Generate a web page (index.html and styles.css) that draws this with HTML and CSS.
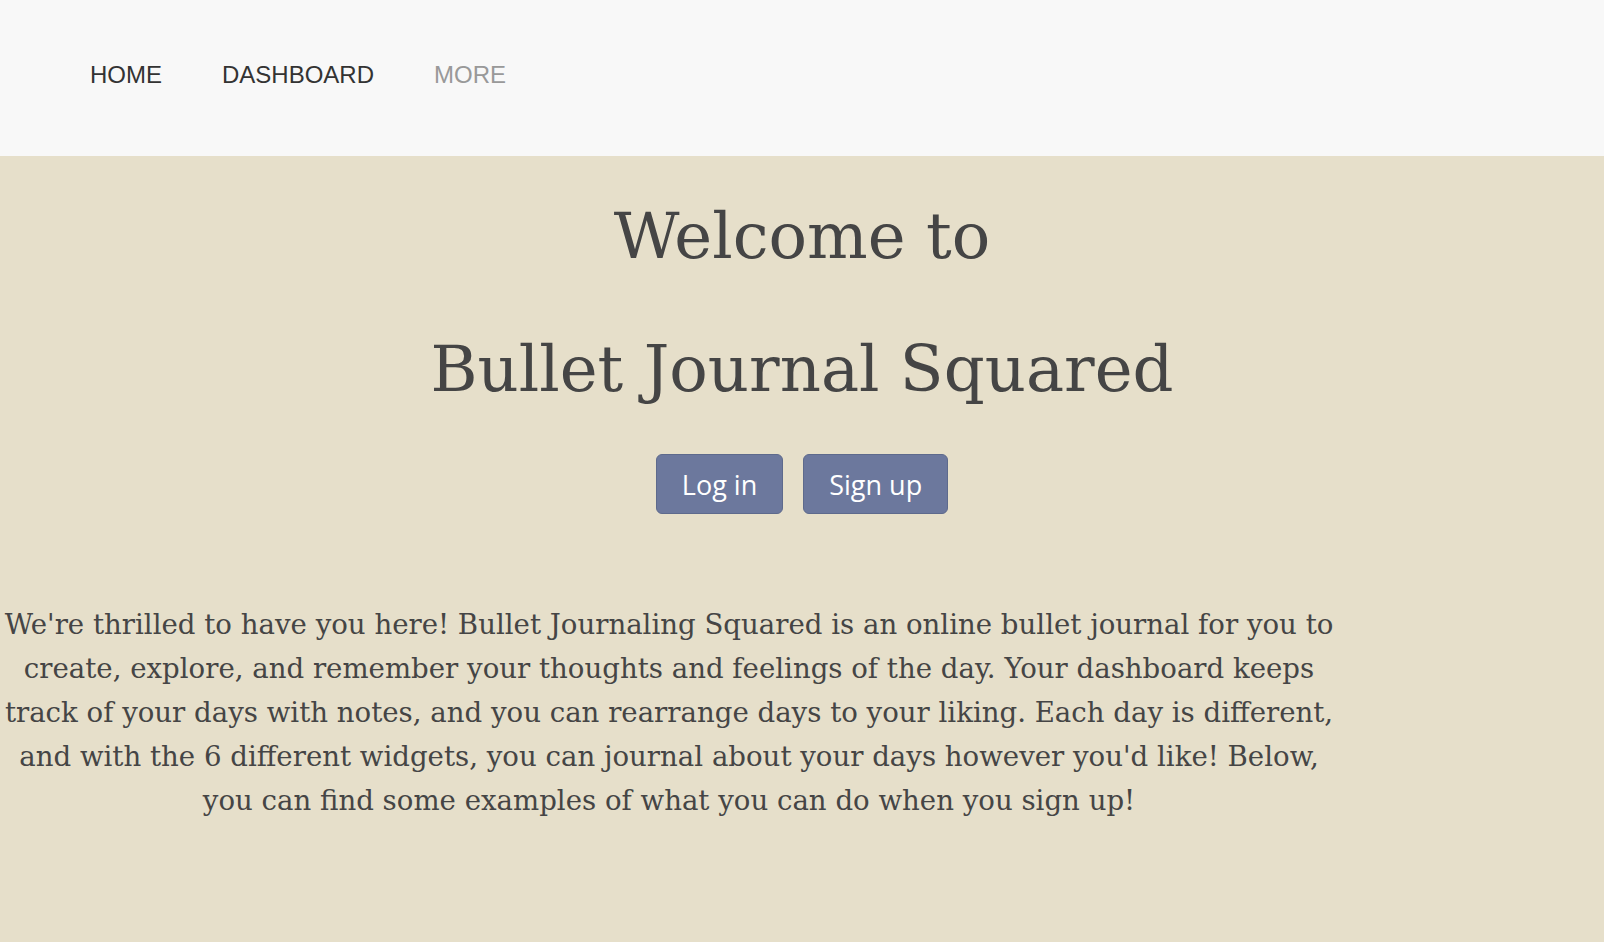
FILE: index.html
```html
<!DOCTYPE html>
<html lang="en">
<head>
<meta charset="utf-8">
<title>Bullet Journal Squared</title>
<link rel="stylesheet" href="styles.css">
</head>
<body>
<header class="topbar">
  <nav class="nav">
    <a class="nav-link" href="#">HOME</a>
    <a class="nav-link" href="#">DASHBOARD</a>
    <a class="nav-link nav-link-muted" href="#">MORE</a>
  </nav>
</header>
<main class="hero">
  <h1 class="hero-title hero-title-first">Welcome to</h1>
  <h1 class="hero-title hero-title-second">Bullet Journal Squared</h1>
  <div class="actions">
    <button class="btn">Log in</button>
    <button class="btn">Sign up</button>
  </div>
  <p class="intro">We're thrilled to have you here! Bullet Journaling Squared is an online bullet journal for you to create, explore, and remember your thoughts and feelings of the day. Your dashboard keeps track of your days with notes, and you can rearrange days to your liking. Each day is different, and with the 6 different widgets, you can journal about your days however you'd like! Below, you can find some examples of what you can do when you sign up!</p>
</main>
</body>
</html>
```

FILE: styles.css
```css
html, body {
  margin: 0;
  padding: 0;
}

body {
  background: #e6dfca;
  height: 942px;
  overflow: hidden;
}

.topbar {
  background: #f8f8f8;
  height: 156px;
  display: flex;
  align-items: center;
}

.nav {
  display: flex;
  gap: 60px;
  padding-left: 90px;
  padding-bottom: 6px;
}

.nav-link {
  font-family: "Liberation Sans", Arial, sans-serif;
  font-size: 24px;
  color: #333333;
  text-decoration: none;
}

.nav-link-muted {
  color: #999999;
}

.hero {
  background: #e6dfca;
  text-align: center;
  color: #454545;
  font-family: "DejaVu Serif", Georgia, serif;
  padding-top: 37px;
  padding-bottom: 60px;
}

.hero-title {
  font-weight: normal;
  font-size: 64px;
  line-height: 86px;
  margin: 0;
}

.hero-title-second {
  margin-top: 47px;
}

.actions {
  display: flex;
  justify-content: center;
  gap: 20px;
  margin-top: 42px;
}

.btn {
  background: #6c789d;
  color: #ffffff;
  border: 1px solid #5e6a8c;
  border-radius: 6px;
  font-family: "Open Sans", "DejaVu Sans", sans-serif;
  font-size: 27px;
  font-weight: 500;
  height: 60px;
  padding: 0 25px;
  cursor: pointer;
}

.intro {
  width: 1338px;
  margin: 89px 0 0;
  font-size: 27.6px;
  line-height: 44px;
}
```
